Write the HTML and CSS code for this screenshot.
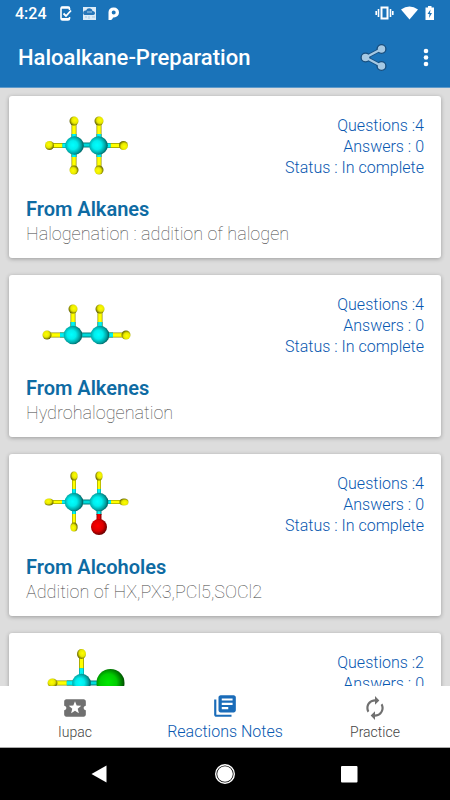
FILE: index.html
```html
<!DOCTYPE html>
<html lang="en">
<head>
<meta charset="utf-8">
<meta name="viewport" content="width=device-width, initial-scale=1">
<title>Haloalkane-Preparation</title>
<link rel="stylesheet" href="styles.css">
</head>
<body>
<svg class="defs" width="0" height="0" aria-hidden="true">
  <defs>
    <radialGradient id="cyan" cx=".42" cy=".48" r=".6"><stop offset="0" stop-color="#00ffff"/><stop offset=".4" stop-color="#00eded"/><stop offset=".75" stop-color="#00a0a0"/><stop offset="1" stop-color="#005050"/></radialGradient>
    <radialGradient id="yellow" cx=".42" cy=".4" r=".62"><stop offset="0" stop-color="#ffff00"/><stop offset=".55" stop-color="#e8e800"/><stop offset="1" stop-color="#5c5c00"/></radialGradient>
    <radialGradient id="red" cx=".42" cy=".42" r=".62"><stop offset="0" stop-color="#ff0000"/><stop offset=".55" stop-color="#dc0000"/><stop offset="1" stop-color="#5a0000"/></radialGradient>
    <radialGradient id="green" cx=".42" cy=".48" r=".6"><stop offset="0" stop-color="#00e800"/><stop offset=".5" stop-color="#00cc00"/><stop offset="1" stop-color="#004400"/></radialGradient>
    <g id="carbon"><circle r="9.300" fill="url(#cyan)"/></g>
    <g id="hydrogen">
      <path d="M0-2.500H26V2.500H0z" fill="#8c8c00"/><path d="M0-1.800H26V1.800H0z" fill="#ffff00"/>
      <path d="M13-2.500H26V2.500H13z" fill="#00a0a0"/><path d="M13-1.800H26V1.800H13z" fill="#00f4f4"/>
      <circle r="4.500" fill="url(#yellow)"/>
    </g>
    <g id="bond"><path d="M0-2.500H26V2.500H0z" fill="#007c7c"/><path d="M0-1.500H26V1.500H0z" fill="#00dada"/></g>
  </defs>
</svg>
<header class="top">
  <div class="status">
    <span class="clock">4:24</span>
    <svg class="notices" width="64" height="16" viewBox="0 0 64 16" aria-hidden="true">
      <path d="M10.500 4V2.500Q10.500 1 9 1H3.500Q2 1 2 2.500V12.500Q2 14 3.500 14H9Q10.500 14 10.500 12.500V11" fill="none" stroke="#fff" stroke-width="1.600"/>
      <path d="M2 1.800H10.500M2 13H10.500" stroke="#fff" stroke-width="2"/>
      <path d="M4.500 7.500L7 10L12 4.500" fill="none" stroke="#fff" stroke-width="1.800"/>
      <path d="M24 1H37V14H24z" fill="#dcecf8"/>
      <path d="M25.500 9Q23.500 8 24.500 5.500Q25.500 4 27 4.500Q28.500 1.500 31.500 2.500Q33.500 3 33.500 5Q36 5 36 7.500Q35.500 9 34 9z" fill="#2676b9"/>
      <path d="M28 6H33M26 11H28M30 10V13M33 11H36" stroke="#a5c9e4"/>
      <path fill-rule="evenodd" d="M49.500 14V6A5 5 0 0 1 54.500 1.500H55A5 5 0 0 1 55 11.500H54Q53.500 14.500 49.500 14zM54.700 4.500A2 2 0 1 0 54.700 8.500A2 2 0 1 0 54.700 4.500z" fill="#fff"/>
    </svg>
    <svg class="signals" width="60" height="16" viewBox="0 0 60 16" aria-hidden="true">
      <path d="M6.500 1.500H12.500V12.500H6.500z" fill="none" stroke="#fff" stroke-width="2"/>
      <path d="M3.500 3V11M15.500 3V11M1.200 5V9M17.800 5V9" stroke="#fff" stroke-width="1.600"/>
      <path d="M26 3.500Q34.500-2.500 43 3.500L34.500 13.500z" fill="#fff"/>
      <path d="M50.500 1.500H53V0H56.500V1.500H59V14H50.500z" fill="#fff"/>
      <path d="M55.500 3.500L52.500 8H54.500L54 12L57 7H55z" fill="#1a73b9"/>
    </svg>
  </div>
  <div class="appbar">
    <h1>Haloalkane-Preparation</h1>
    <button class="icon" aria-label="Share">
      <svg width="28" height="28" viewBox="0 0 28 28"><path d="M21.500 5L5.500 13.500L21.500 22" fill="none" stroke="#195184" stroke-width="4"/><g fill="#a5c9e4" stroke="#174d7d" stroke-width="1.300"><circle cx="21.500" cy="5" r="4.400"/><circle cx="5.500" cy="13.500" r="4.400"/><circle cx="21.500" cy="22" r="4.400"/></g><path d="M21.500 5L5.500 13.500L21.500 22" fill="none" stroke="#a5c9e4" stroke-width="2.200"/></svg>
    </button>
    <button class="icon more" aria-label="More options">
      <svg width="6" height="20" viewBox="0 0 6 20" fill="#fff"><circle cx="3" cy="3" r="2.300"/><circle cx="3" cy="9.500" r="2.300"/><circle cx="3" cy="16" r="2.300"/></svg>
    </button>
  </div>
</header>
<main class="list">
  <article class="card">
    <div class="summary">
      <svg width="120" height="92" viewBox="0 0 120 92" aria-hidden="true">
        <use href="#bond" transform="translate(47 40)"/>
        <use href="#hydrogen" transform="translate(22.500 40.500)"/><use href="#hydrogen" transform="translate(96.500 40.500) rotate(180)"/>
        <use href="#hydrogen" transform="translate(47 16) rotate(90)"/><use href="#hydrogen" transform="translate(72 16) rotate(90)"/>
        <use href="#hydrogen" transform="translate(47 65) rotate(-90)"/><use href="#hydrogen" transform="translate(72 65) rotate(-90)"/>
        <use href="#carbon" transform="translate(47.500 40.500)"/><use href="#carbon" transform="translate(71.500 40.500)"/>
      </svg>
      <p class="stats">Questions :4<br>Answers : 0<br>Status : In complete</p>
    </div>
    <h2>From Alkanes</h2>
    <p class="note">Halogenation : addition of halogen</p>
  </article>
  <article class="card">
    <div class="summary">
      <svg width="120" height="92" viewBox="0 0 120 92" aria-hidden="true">
        <use href="#bond" transform="translate(46 51)"/>
        <use href="#hydrogen" transform="translate(20 51)"/><use href="#hydrogen" transform="translate(99 51) rotate(180)"/>
        <use href="#hydrogen" transform="translate(46 25) rotate(90)"/><use href="#hydrogen" transform="translate(73 25) rotate(90)"/>
        <use href="#carbon" transform="translate(46 51)"/><use href="#carbon" transform="translate(73 51)"/>
      </svg>
      <p class="stats">Questions :4<br>Answers : 0<br>Status : In complete</p>
    </div>
    <h2>From Alkenes</h2>
    <p class="note">Hydrohalogenation</p>
  </article>
  <article class="card">
    <div class="summary">
      <svg width="120" height="92" viewBox="0 0 120 92" aria-hidden="true">
        <use href="#bond" transform="translate(47 39)"/>
        <use href="#hydrogen" transform="translate(22 39) scale(1 .8)"/><use href="#hydrogen" transform="translate(97 39) rotate(180) scale(1 .8)"/>
        <use href="#hydrogen" transform="translate(47 13) rotate(90) scale(1 .8)"/><use href="#hydrogen" transform="translate(72 13) rotate(90) scale(1 .8)"/>
        <use href="#hydrogen" transform="translate(47 64) rotate(-90) scale(1 .8)"/>
        <path d="M69.500 39H74.500V52H69.500z" fill="#008080"/><path d="M70.500 39H73.500V52H70.500z" fill="#00f4f4"/>
        <path d="M69.500 51H74.500V60H69.500z" fill="#a00000"/><path d="M70.500 51H73V60H70.500z" fill="#f00000"/>
        <circle cx="72" cy="64" r="8" fill="url(#red)"/>
        <use href="#carbon" transform="translate(47 39)"/><use href="#carbon" transform="translate(72 39)"/>
      </svg>
      <p class="stats">Questions :4<br>Answers : 0<br>Status : In complete</p>
    </div>
    <h2>From Alcoholes</h2>
    <p class="note">Addition of HX,PX3,PCl5,SOCl2</p>
  </article>
  <article class="card">
    <div class="summary">
      <svg width="120" height="92" viewBox="0 0 120 92" aria-hidden="true">
        <use href="#bond" transform="translate(54 41)"/>
        <use href="#hydrogen" transform="translate(25.500 41) scale(1.100 1)"/><use href="#hydrogen" transform="translate(54.500 12) rotate(90) scale(1.100 1)"/>
        <use href="#carbon" transform="translate(54.500 41)"/><circle cx="83.500" cy="41" r="14" fill="url(#green)"/>
      </svg>
      <p class="stats">Questions :2<br>Answers : 0</p>
    </div>
  </article>
</main>
<nav class="tabs">
  <a class="tab" href="#iupac">
    <svg width="26" height="26" viewBox="0 0 24 24"><path fill="currentColor" fill-rule="evenodd" d="M20 12c0-1.100.9-2 2-2V6c0-1.100-.9-2-2-2H4c-1.100 0-1.990.9-1.990 2v4c1.100 0 1.990.9 1.990 2s-.89 2-2 2v4c0 1.100.9 2 2 2h16c1.100 0 2-.9 2-2v-4c-1.100 0-2-.9-2-2zm-4.420 4.800L12 14.500l-3.580 2.300 1.080-4.120-3.290-2.690 4.240-.25L12 5.800l1.540 3.950 4.240.25-3.290 2.690 1.090 4.110z"/></svg>
    <span>Iupac</span>
  </a>
  <a class="tab active" href="#notes" aria-current="page">
    <svg width="26" height="26" viewBox="0 0 24 24"><path fill="currentColor" d="M4 6H2v14c0 1.100.9 2 2 2h14v-2H4V6zm16-4H8c-1.100 0-2 .9-2 2v12c0 1.100.9 2 2 2h12c1.100 0 2-.9 2-2V4c0-1.100-.9-2-2-2zm-1 9H9V9h10v2zm-4 4H9v-2h6v2zm4-8H9V5h10v2z"/></svg>
    <span>Reactions Notes</span>
  </a>
  <a class="tab" href="#practice">
    <svg width="26" height="26" viewBox="0 0 24 24"><path fill="currentColor" d="M12 6v3l4-4-4-4v3c-4.420 0-8 3.580-8 8 0 1.570.46 3.030 1.240 4.260L6.700 14.800c-.45-.83-.7-1.790-.7-2.800 0-3.310 2.690-6 6-6zm6.760 1.740L17.300 9.200c.44.840.7 1.790.7 2.800 0 3.310-2.690 6-6 6v-3l-4 4 4 4v-3c4.420 0 8-3.580 8-8 0-1.570-.46-3.030-1.240-4.260z"/></svg>
    <span>Practice</span>
  </a>
</nav>
<footer class="system">
  <button aria-label="Back"><svg width="24" height="24" viewBox="0 0 24 24"><path d="M2.500 12L17.500 3.500V20.500z" fill="#fff"/></svg></button>
  <button aria-label="Home"><svg width="24" height="24" viewBox="0 0 24 24"><circle cx="12" cy="12" r="9.300" fill="none" stroke="#fff" stroke-width="1.400"/><circle cx="12" cy="12" r="7.800" fill="#fff"/></svg></button>
  <button aria-label="Recent apps"><svg width="24" height="24" viewBox="0 0 24 24"><rect x="4" y="4" width="16.500" height="16.500" rx="1" fill="#fff"/></svg></button>
</footer>
</body>
</html>
```

FILE: styles.css
```css
* { box-sizing: border-box; }
body {
  margin: 0;
  height: 100vh;
  display: flex;
  flex-direction: column;
  overflow: hidden;
  background: #dddddd;
  font-family: Roboto, "Liberation Sans", sans-serif;
}
h1, h2, p { margin: 0; }
svg { display: block; flex: none; }
button { border: 0; padding: 0; background: none; }
.defs { position: absolute; }

.top { background: #1a73b9; color: #fff; border-bottom: 1px solid #5e9acb; }
.status { display: flex; align-items: center; height: 28px; padding: 0 15px 0 15px; }
.clock { font-size: 16px; font-weight: 500; line-height: 28px; }
.notices { margin-left: 12px; }
.signals { margin-left: auto; }
.appbar { display: flex; align-items: center; height: 59px; padding: 0 16px 0 18px; }
.appbar h1 { flex: 1; font-size: 22px; font-weight: 500; line-height: 28px; }
.icon { display: grid; place-items: center; width: 28px; height: 28px; }
.more { width: 16px; margin-left: 30px; }

.list {
  flex: 1;
  min-height: 0;
  overflow: hidden;
  display: flex;
  flex-direction: column;
  gap: 17px;
  padding: 8px 9px 0;
}
.card {
  flex: none;
  padding: 9px 17px 12px;
  border-radius: 3px;
  background: #fff;
  box-shadow: 0 1px 4px rgba(0, 0, 0, .3);
}
.summary { display: flex; justify-content: space-between; }
.summary svg { margin-left: 1px; }
.stats {
  padding-top: 10px;
  color: #0858b0;
  font-size: 16px;
  font-weight: 300;
  line-height: 21px;
  text-align: right;
}
.card h2 { color: #0e6ba3; font-size: 20px; font-weight: 600; line-height: 24px; }
.note { color: #444; font-size: 18px; font-weight: 100; line-height: 25px; }

.tabs {
  display: grid;
  grid-template-columns: repeat(3, 1fr);
  height: 62px;
  background: #fff;
  border-bottom: 1px solid #aaa;
}
.tab {
  display: flex;
  flex-direction: column;
  align-items: center;
  padding-top: 9px;
  color: #707070;
  font-size: 14px;
  line-height: 22px;
  text-decoration: none;
}
.tab span { color: #444; font-weight: 300; }
.tab.active { padding-top: 7px; color: #1a6cb9; font-size: 16px; line-height: 26px; }
.tab.active span { color: #0858b0; }

.system { display: flex; justify-content: center; align-items: center; gap: 100px; height: 52px; background: #000; }
```
